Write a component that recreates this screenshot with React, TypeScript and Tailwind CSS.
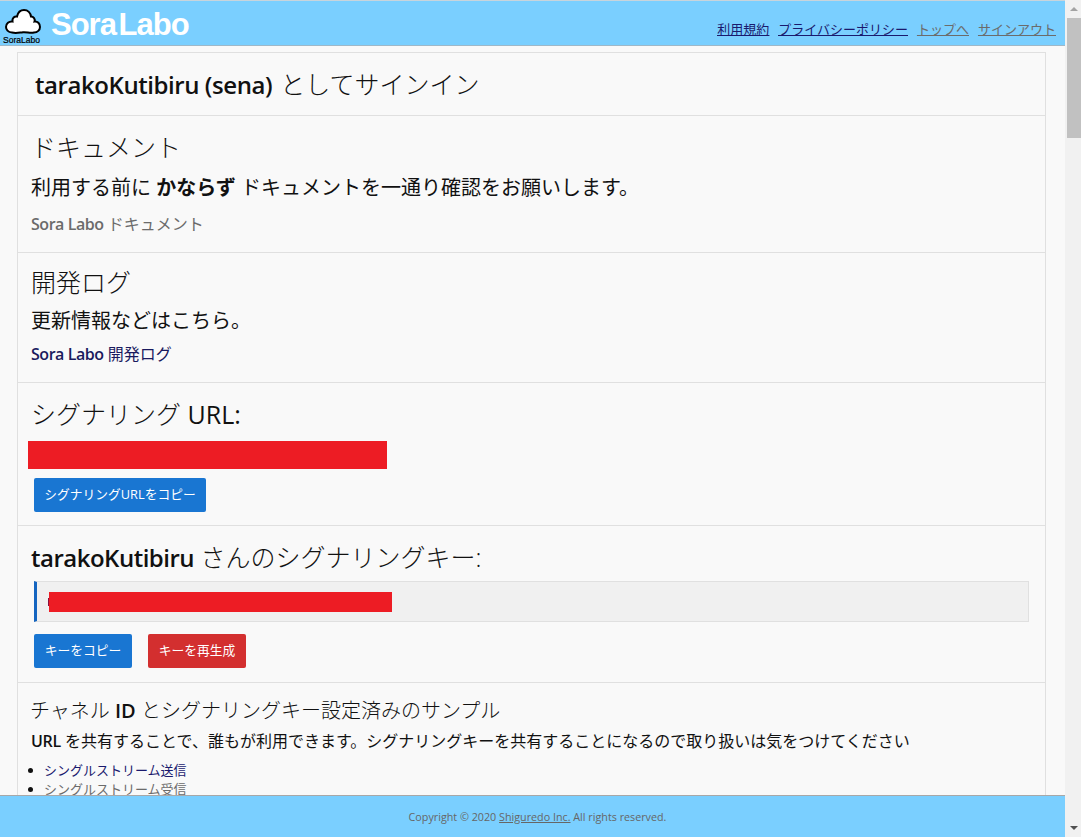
const jp = "font-['Open_Sans','Noto_Sans_CJK_JP',sans-serif]";
const line = "border-b border-[#e0e0e0]";

function Logo() {
  return (
    <div className="relative w-[44px] h-[44px] shrink-0">
      <svg width="38" height="28" viewBox="0 0 38 28" className="absolute left-[4px] top-[6px]">
        <path
          d="M8 25.5 C4 25.5 2 22.5 2 20 C2 16.5 5 14 8.5 14.5 C8 11 10.5 9 13 9.5 C14 5 16.5 3 20 3 C24 3 26.5 6 27 9.5 C29.5 9.5 31.5 12 30.5 14.5 C33.5 14 36 16.5 36 20 C36 23 33.5 25.5 30 25.5 C26 26.5 23 24.8 19 25.2 C15 25.6 12 26.5 8 25.5 Z"
          fill="#fff"
          stroke="#000"
          strokeWidth="2"
        />
      </svg>
      <span className="absolute left-[3px] top-[34px] text-[8.5px] leading-[10px] font-['Liberation_Sans',sans-serif] [-webkit-text-stroke:0.2px_black] text-black whitespace-nowrap">
        SoraLabo
      </span>
    </div>
  );
}

function Btn({ label, color }: { label: string; color: string }) {
  return (
    <button className={`h-[34px] rounded-[2px] text-white text-[12.75px] whitespace-nowrap ${color}`}>{label}</button>
  );
}

export default function App() {
  return (
    <div className={`h-[837px] w-[1081px] overflow-hidden flex bg-[#f9f9f9] text-[#111] ${jp}`}>
      <div className="w-[1065px] h-full flex flex-col">
        <header className="h-[46px] shrink-0 bg-[#7acfff] border-t border-t-[#c8d4dc] border-b border-b-[#9fb8c8] flex items-center pr-[9px]">
          <Logo />
          <span className="text-[31px] leading-none font-bold text-white font-['Liberation_Sans',sans-serif] tracking-[-1px] [word-spacing:-5px] ml-[7px] mt-[3px]">
            Sora Labo
          </span>
          <nav className="ml-auto self-end pb-[8px] flex gap-[9px] text-[13px] leading-[16px] underline">
            <a className="text-[#1a1a6e]">利用規約</a>
            <a className="text-[#1a1a6e]">プライバシーポリシー</a>
            <a className="text-[#6b6b6b]">トップへ</a>
            <a className="text-[#6b6b6b]">サインアウト</a>
          </nav>
        </header>

        <main className="flex-1 min-h-0 overflow-hidden pl-[17px] pr-[19px] pt-[6px]">
          <div className="border border-[#e0e0e0] border-b-0">
            <section className={`h-[63px] ${line} flex items-center pl-[17px] pt-[1px]`}>
              <span className="text-[24px] font-semibold tracking-[-0.43px]">tarakoKutibiru (sena)</span>
              <span className="ml-[8px] text-[25px] font-light">としてサインイン</span>
            </section>

            <section className={`h-[137px] ${line} pl-[13px] pt-[12px]`}>
              <h2 className="text-[25px] leading-[38px] font-light">ドキュメント</h2>
              <p className="text-[20px] leading-[28px] mt-[8px]">
                利用する前に <b className="font-bold">かならず</b> ドキュメントを一通り確認をお願いします。
              </p>
              <p className="text-[16px] leading-[24px] mt-[10px] text-[#6b6b6b]">
                <span className="font-semibold tracking-[-0.45px]">Sora Labo</span> ドキュメント
              </p>
            </section>

            <section className={`h-[130px] ${line} pl-[13px] pt-[11px]`}>
              <h2 className="text-[25px] leading-[36px] font-light">開発ログ</h2>
              <p className="text-[20px] leading-[28px] mt-[7px]">更新情報などはこちら。</p>
              <p className="text-[16px] leading-[22px] mt-[8px] text-[#1a1a5e]">
                <span className="font-semibold tracking-[-0.45px]">Sora Labo</span> 開発ログ
              </p>
            </section>

            <section className={`h-[143px] ${line} pt-[13px]`}>
              <h2 className="pl-[13px] text-[25px] leading-[36px] font-light">
                シグナリング <span className="font-normal">URL:</span>
              </h2>
              <div className="ml-[10px] mt-[9px] w-[359px] h-[28px] bg-[#ed1c24]" />
              <div className="ml-[16px] mt-[9px] flex">
                <Btn label="シグナリングURLをコピー" color="w-[172px] bg-[#1976d2]" />
              </div>
            </section>

            <section className={`h-[157px] ${line} pt-[13px]`}>
              <h2 className="pl-[13px] text-[25px] leading-[36px] font-light whitespace-nowrap">
                <span className="text-[24px] font-semibold tracking-[-0.5px]">tarakoKutibiru</span> さんのシグナリングキー:
              </h2>
              <div className="ml-[16px] mr-[16px] mt-[5px] h-[41px] bg-[#f0f0f0] border border-[#e0e0e0] border-l-[3px] border-l-[#1565c0] flex items-center pl-[11px]">
                <div className="w-[1px] h-[8px] bg-[#8a1040]" />
                <div className="w-[343px] h-[20px] bg-[#ed1c24]" />
              </div>
              <div className="ml-[16px] mt-[12px] flex gap-[16px]">
                <Btn label="キーをコピー" color="w-[98px] bg-[#1976d2]" />
                <Btn label="キーを再生成" color="w-[98px] bg-[#d32f2f]" />
              </div>
            </section>

            <section className="pl-[12px] pt-[13px]">
              <h3 className="text-[20px] leading-[30px] font-light">
                チャネル <span className="font-semibold">ID</span> とシグナリングキー設定済みのサンプル
              </h3>
              <p className="text-[16px] leading-[22px] mt-[4px] ml-[1px] whitespace-nowrap">
                <span className="font-semibold tracking-[-0.3px]">URL</span> を共有することで、誰もが利用できます。シグナリングキーを共有することになるので取り扱いは気をつけてください
              </p>
              <ul className="list-disc ml-[14px] mt-[9px] text-[13px] leading-[19px] marker:text-[#111]">
                <li className="text-[#1a1a6e]">シングルストリーム送信</li>
                <li className="text-[#6b6b6b]">シングルストリーム受信</li>
              </ul>
            </section>
          </div>
        </main>

        <footer className="h-[42px] shrink-0 bg-[#7acfff] border-t border-[#a8a8a8] flex items-center justify-center text-[10.75px] text-[#666]">
          <span className="ml-[10px] mt-[1px]">
            Copyright © 2020 <u>Shiguredo Inc.</u> All rights reserved.
          </span>
        </footer>
      </div>

      {/* scrollbar */}
      <div className="w-[16px] h-full bg-[#f1f1f1] flex flex-col items-center">
        <svg width="16" height="18" viewBox="0 0 16 18" className="shrink-0">
          <path d="M5 11 L9 7 L13 11 Z" fill="#a3a3a3" />
        </svg>
        <div className="ml-[2px] w-[14px] h-[120px] bg-[#c1c1c1]" />
        <svg width="16" height="18" viewBox="0 0 16 18" className="shrink-0 mt-auto">
          <path d="M5 7 L9 11 L13 7 Z" fill="#505050" />
        </svg>
      </div>
    </div>
  );
}
